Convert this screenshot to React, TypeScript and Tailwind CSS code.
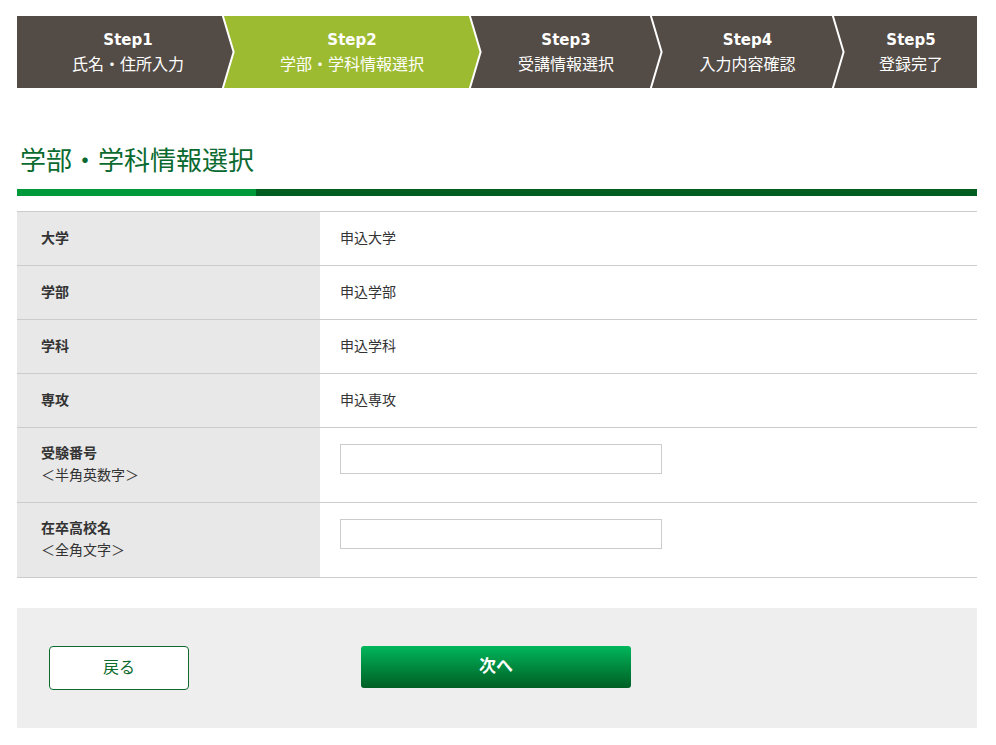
import React from 'react';

const JP = { fontFamily: '"Noto Sans CJK JP", "Noto Sans", sans-serif' };

interface Step {
  label: string;
  title: string;
  width: number;
  active?: boolean;
}

const STEPS: Step[] = [
  { label: 'Step1', title: '氏名・住所入力', width: 205 },
  { label: 'Step2', title: '学部・学科情報選択', width: 247, active: true },
  { label: 'Step3', title: '受講情報選択', width: 181 },
  { label: 'Step4', title: '入力内容確認', width: 182 },
  { label: 'Step5', title: '登録完了', width: 145 },
];

const BROWN = '#534b45';
const LIME = '#9dbb30';

const StepBar: React.FC = () => (
  <ol className="flex h-[72px] w-[960px]">
    {STEPS.map((step, i) => {
      const color = step.active ? LIME : BROWN;
      const last = i === STEPS.length - 1;
      return (
        <li
          key={step.label}
          className={`relative flex flex-none flex-col items-center justify-center text-white ${i === 0 ? 'pl-[17px]' : 'pl-[13px]'}`}
          style={{ width: step.width, backgroundColor: color }}
        >
          <span className="text-[15px] font-bold leading-[20px]" style={{ fontFamily: '"DejaVu Sans", Verdana, sans-serif' }}>
            {step.label}
          </span>
          <span className="mt-[2px] text-[16px] leading-[22px]" style={JP}>
            {step.title}
          </span>
          {!last && (
            <svg className="absolute left-full top-0 z-10" width="14" height="72" viewBox="0 0 14 72">
              <polygon points="0,0 0.6,0 11.6,36 0.6,72 0,72" fill={color} />
              <polyline points="0.6,-1 11.6,36 0.6,73" fill="none" stroke="#ffffff" strokeWidth="2" />
            </svg>
          )}
        </li>
      );
    })}
  </ol>
);

interface Row {
  label: string;
  note?: string;
  value?: string;
}

const ROWS: Row[] = [
  { label: '大学', value: '申込大学' },
  { label: '学部', value: '申込学部' },
  { label: '学科', value: '申込学科' },
  { label: '専攻', value: '申込専攻' },
  { label: '受験番号', note: '＜半角英数字＞' },
  { label: '在卒高校名', note: '＜全角文字＞' },
];

export default function App() {
  return (
    <div className="min-h-[745px] bg-white pl-[17px] pt-4 text-[#333333]" style={JP}>
      <StepBar />

      <h1 className="mt-[53px] pl-[3px] text-[26px] font-normal leading-[36px] text-[#0b6a30]">学部・学科情報選択</h1>

      <div className="mt-[12px] flex h-[7px] w-[960px]">
        <div className="w-[239px] bg-[#009a3a]" />
        <div className="flex-1 bg-[#005e20]" />
      </div>

      <div className="mt-[15px] w-[960px] border-t border-[#cccccc]">
        {ROWS.map((row) => (
          <div key={row.label} className="flex border-b border-[#cccccc]">
            <div
              className={`w-[303px] flex-none bg-[#e8e8e8] pl-[24px] text-[14px] leading-[22px] ${row.note ? 'pb-[17px] pt-[13px]' : 'pb-[17px] pt-[14px]'}`}
            >
              <div className="font-bold">{row.label}</div>
              {row.note && <div>{row.note}</div>}
            </div>
            <div className={`flex-1 pl-[20px] text-[14px] leading-[22px] ${row.note ? 'pt-[16px]' : 'pb-[17px] pt-[14px]'}`}>
              {row.value ? (
                row.value
              ) : (
                <input type="text" className="block h-[30px] w-[322px] border border-[#cccccc] bg-white px-2 outline-none" />
              )}
            </div>
          </div>
        ))}
      </div>

      <div className="mt-[30px] flex h-[120px] w-[960px] items-start bg-[#eeeeee] pl-[32px] pt-[38px]">
        <button className="flex h-[44px] w-[140px] items-center justify-center rounded-[4px] border border-[#0d6b2f] bg-white pb-[5px] text-[16px] text-[#0d6b2f]">
          戻る
        </button>
        <button className="ml-[172px] flex h-[42px] w-[270px] items-center justify-center rounded-[3px] bg-gradient-to-b from-[#00b75c] to-[#005f24] pb-[5px] text-[17px] font-bold text-white">
          次へ
        </button>
      </div>
    </div>
  );
}
